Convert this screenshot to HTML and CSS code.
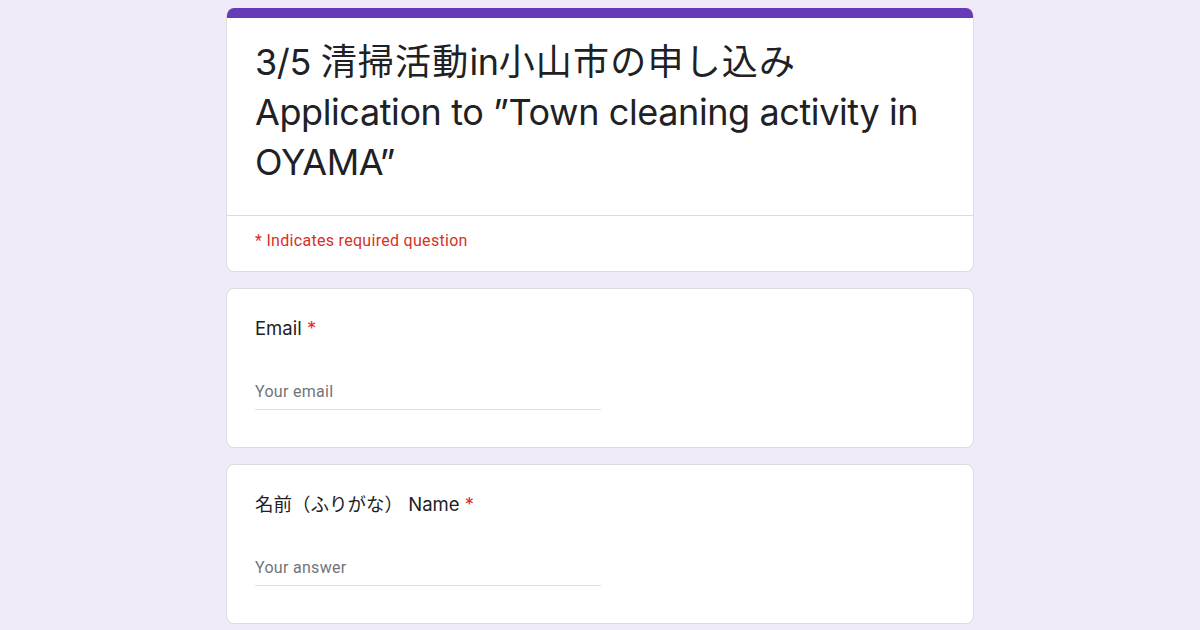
FILE: index.html
```html
<!DOCTYPE html>
<html lang="ja">
<head>
<meta charset="utf-8">
<title>3/5 清掃活動in小山市の申し込み</title>
<link rel="stylesheet" href="styles.css">
</head>
<body>
<main class="form">
  <section class="card header-card">
    <div class="accent"></div>
    <div class="title-area">
      <h1 class="title">3/5 <span class="ja">清掃活動</span>in<span class="ja">小山市の申し込み</span> Application to ”Town cleaning activity in OYAMA”</h1>
    </div>
    <div class="required-note">* Indicates required question</div>
  </section>

  <section class="card q-card">
    <div class="q-label">Email <span class="star">*</span></div>
    <div class="q-input">Your email</div>
  </section>

  <section class="card q-card">
    <div class="q-label">名前（ふりがな） Name <span class="star">*</span></div>
    <div class="q-input">Your answer</div>
  </section>
</main>
</body>
</html>
```

FILE: styles.css
```css
html, body {
  margin: 0;
  padding: 0;
}
body {
  background: #f0ebf8;
  font-family: Roboto, "Noto Sans CJK JP", sans-serif;
  color: #202124;
  height: 630px;
  overflow: hidden;
}
.form {
  width: 748px;
  margin: 0 auto;
  padding-top: 8px;
  display: flex;
  flex-direction: column;
  gap: 16px;
}
.card {
  background: #fff;
  border: 1px solid #dadce0;
  border-radius: 8px;
  box-sizing: border-box;
  overflow: hidden;
}
.header-card {
  border-top: none;
}
.accent {
  height: 10px;
  background: #673ab7;
  margin: 0 -1px;
}
.title-area {
  padding: 19px 28px 28px 28px;
  border-bottom: 1px solid #dadce0;
}
.title {
  margin: 0;
  font-family: Inter, "Noto Sans CJK JP", sans-serif;
  font-weight: 400;
  font-size: 36px;
  line-height: 50px;
  color: #202124;
  letter-spacing: -0.4px;
}
.ja {
  letter-spacing: 1.2px;
}
.required-note {
  padding: 15px 28px 20px 28px;
  font-size: 16px;
  line-height: 20px;
  letter-spacing: 0.3px;
  color: #d93025;
}
.q-card {
  padding: 27px 28px 37px 28px;
}
.q-label {
  font-family: Inter, "Noto Sans CJK JP", sans-serif;
  font-size: 18.5px;
  line-height: 24px;
  color: #202124;
}
.star {
  color: #d93025;
}
.q-input {
  margin-top: 40px;
  width: 346px;
  font-size: 16px;
  line-height: 24px;
  letter-spacing: 0.3px;
  padding-bottom: 5px;
  color: #70757a;
  border-bottom: 1px solid #e0e0e0;
}
```
